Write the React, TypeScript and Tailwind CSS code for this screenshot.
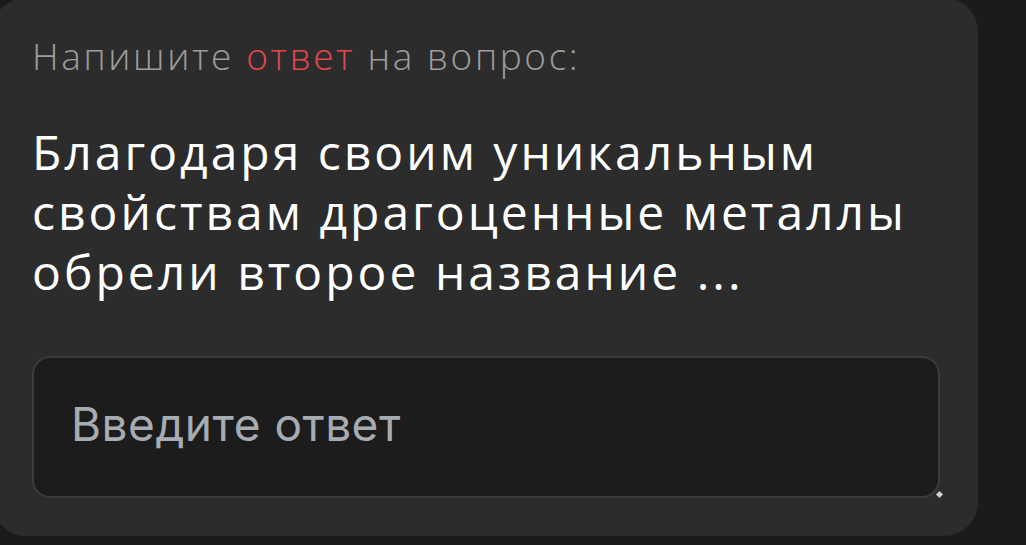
export default function App() {
  return (
    <div className="h-[545px] w-[1026px] overflow-hidden bg-[#1b1b1b]">
      <div className="ml-[-8px] mt-[-2px] w-[986px] rounded-[34px] bg-[#2c2c2c] pb-[38px] pl-[40px] pr-[38px] pt-[34px]">
        <p className="text-[37px] font-light leading-[48px] tracking-[2.6px] text-[#9d9d9d] [font-family:'Open_Sans',sans-serif]">
          Напишите <span className="text-[#e4474c]">ответ</span> на вопрос:
        </p>
        <h2 className="mt-[42px] text-[48px] font-medium leading-[60px] tracking-[3px] text-white [font-family:'Open_Sans',sans-serif]">
          Благодаря своим уникальным
          <br />
          свойствам драгоценные металлы
          <br />
          обрели второе название ...
        </h2>
        <div className="relative mt-[54px]">
          <textarea
            placeholder="Введите ответ"
            className="block h-[142px] w-full resize-none rounded-[18px] border-2 border-[#3b3b3b] bg-[#1c1c1c] px-[37px] py-[38px] text-[46px] leading-[56px] tracking-[0.5px] text-white outline-none placeholder:text-[#a7abb2] [font-family:Inter,sans-serif]"
          />
          <span className="absolute bottom-[1px] right-[-2px] h-[5px] w-[5px] rotate-45 bg-[#d0d0d0]" />
        </div>
      </div>
    </div>
  );
}
